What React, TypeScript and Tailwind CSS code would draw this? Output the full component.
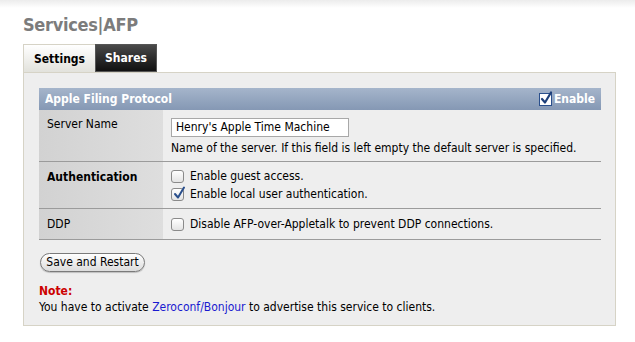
import React from "react"

function MacCheck({ checked }: { checked?: boolean }) {
  return (
    <span className="relative inline-block w-[13px] h-[13px] shrink-0 rounded-[3px] border border-[#8a8a8a] bg-gradient-to-b from-white to-[#e4e4e4]">
      {checked && (
        <svg className="absolute left-[1px] top-[-3px]" width="13" height="14" viewBox="0 0 13 14">
          <path d="M2 8 L5 11.5 L11 1.5" fill="none" stroke="#2a4f8c" strokeWidth="2" strokeLinecap="round" strokeLinejoin="round" />
        </svg>
      )}
    </span>
  )
}

export default function App() {
  return (
    <div className="w-[635px] h-[342px] bg-white font-['DejaVu_Sans_Condensed','DejaVu_Sans',Verdana,sans-serif] text-[12px] text-black overflow-hidden">
      <div className="h-[8px] bg-gradient-to-b from-[#ececec] to-white" />
      <div className="pl-[23px] pr-[19px]">
        <h1 className="text-[18px] font-bold text-[#7c7c7c] leading-[24px] mt-[5px] tracking-[-0.3px]">Services|AFP</h1>
        <div className="flex mt-[7px] h-[28px]">
          <div className="w-[72px] flex items-center justify-center font-bold text-[12px] bg-gradient-to-b from-white to-[#e2e2dc] border-l border-t border-[#d6d3c6]">
            Settings
          </div>
          <div className="w-[62px] flex items-center justify-center font-bold text-[12px] text-white bg-gradient-to-b from-[#4a4a4a] to-[#111] border border-[#555]">
            Shares
          </div>
        </div>
        <div className="bg-[#eeeeee] border border-[#d6d3c6] px-[15px] pt-[15px] h-[254px]">
          <div className="w-[562px]">
            <div className="h-[22px] flex items-center justify-between px-[6px] bg-gradient-to-b from-[#a5b5cb] to-[#8598b4] text-white font-bold">
              <span>Apple Filing Protocol</span>
              <span className="flex items-center gap-[2px]">
                <span className="relative inline-block w-[13px] h-[13px] bg-white border border-[#2a4f8c]">
                  <svg className="absolute left-[0px] top-[-3px]" width="13" height="14" viewBox="0 0 13 14">
                    <path d="M2 8 L5 11.5 L11 1.5" fill="none" stroke="#1d3f7a" strokeWidth="2.2" strokeLinecap="round" strokeLinejoin="round" />
                  </svg>
                </span>
                Enable
              </span>
            </div>
            <div className="flex border-b border-[#9b9b9b]">
              <div className="w-[124px] bg-gradient-to-r from-[#d2d2d2] to-[#dedede] px-[8px] pt-[5px]">Server Name</div>
              <div className="flex-1 pl-[8px] pt-[8px] pb-[4px]">
                <div className="w-[178px] h-[19px] bg-white border border-[#a8a8a8] px-[4px] leading-[17px] whitespace-nowrap">Henry's Apple Time Machine</div>
                <div className="mt-[3px] leading-[17px]">Name of the server. If this field is left empty the default server is specified.</div>
              </div>
            </div>
            <div className="flex border-b border-[#9b9b9b]">
              <div className="w-[124px] bg-gradient-to-r from-[#d2d2d2] to-[#dedede] px-[8px] pt-[6px] font-bold">Authentication</div>
              <div className="flex-1 pl-[8px] pt-[7px] pb-[6px] flex flex-col gap-[3px]">
                <label className="flex items-center gap-[6px] leading-[15px]">
                  <MacCheck />
                  Enable guest access.
                </label>
                <label className="flex items-center gap-[6px] leading-[15px]">
                  <MacCheck checked />
                  Enable local user authentication.
                </label>
              </div>
            </div>
            <div className="flex border-b border-[#9b9b9b] h-[31px]">
              <div className="w-[124px] bg-gradient-to-r from-[#d2d2d2] to-[#dedede] px-[8px] pt-[6px]">DDP</div>
              <div className="flex-1 pl-[8px] flex items-center gap-[6px]">
                <MacCheck />
                Disable AFP-over-Appletalk to prevent DDP connections.
              </div>
            </div>
            <button className="mt-[13px] ml-[1px] h-[19px] w-[105px] rounded-full border border-[#7a7a7a] bg-gradient-to-b from-white to-[#dcdcdc] text-[12px] leading-[17px] shadow-[0_1px_1px_rgba(0,0,0,0.2)]">
              Save and Restart
            </button>
            <div className="mt-[11px] text-[#cc0000] font-bold leading-[16px]">Note:</div>
            <div className="leading-[16px]">
              You have to activate <span className="text-[#1a1ad0]">Zeroconf/Bonjour</span> to advertise this service to clients.
            </div>
          </div>
        </div>
      </div>
    </div>
  )
}
